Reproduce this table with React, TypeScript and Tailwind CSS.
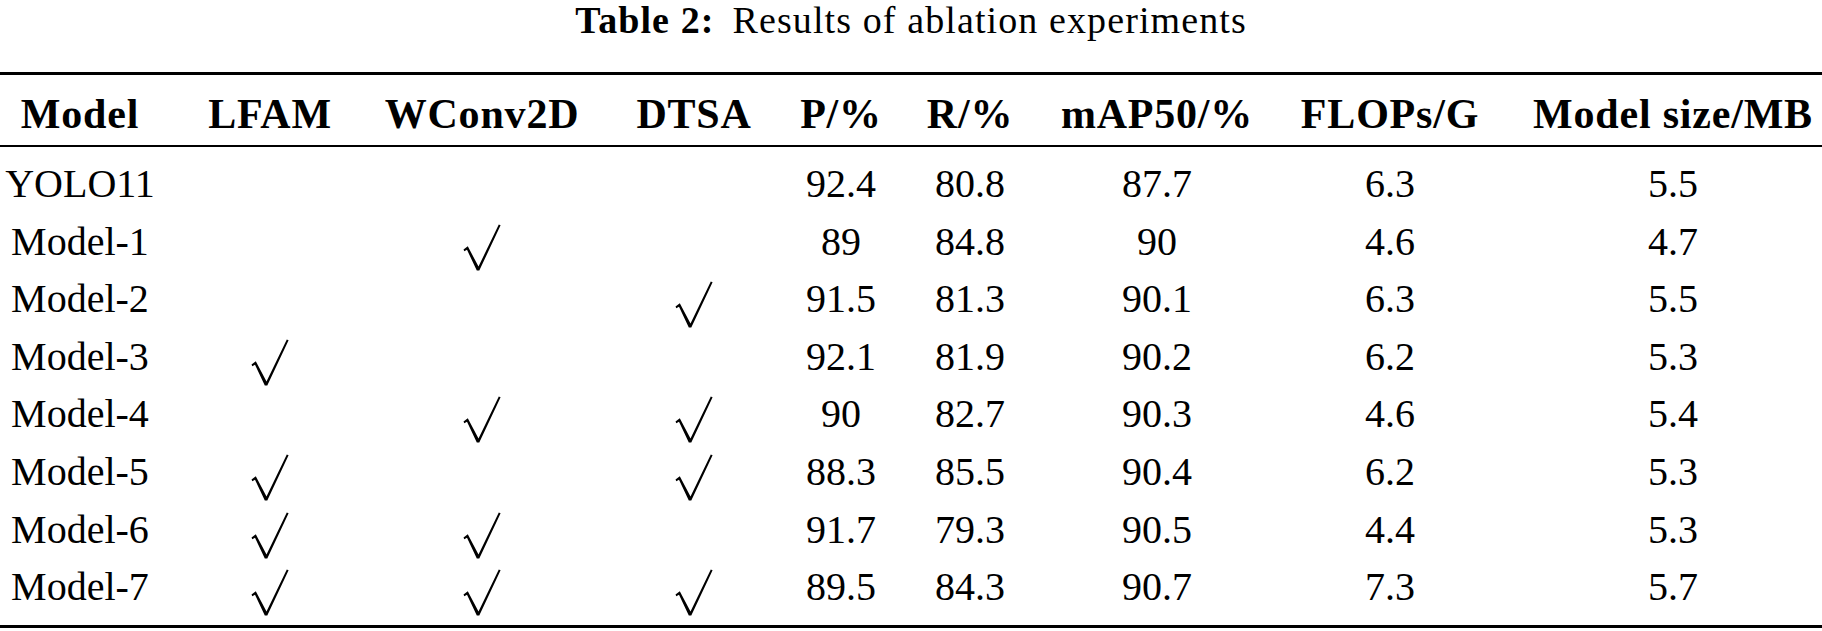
import React from 'react';

const cols = 'grid grid-cols-[160px_220px_204px_220px_74px_184px_190px_276px_290px]';

const headers = ['Model', 'LFAM', 'WConv2D', 'DTSA', 'P/%', 'R/%', 'mAP50/%', 'FLOPs/G', 'Model size/MB'];

type Row = {
  name: string;
  lfam: boolean;
  wconv: boolean;
  dtsa: boolean;
  values: string[];
};

const rows: Row[] = [
  { name: 'YOLO11', lfam: false, wconv: false, dtsa: false, values: ['92.4', '80.8', '87.7', '6.3', '5.5'] },
  { name: 'Model-1', lfam: false, wconv: true, dtsa: false, values: ['89', '84.8', '90', '4.6', '4.7'] },
  { name: 'Model-2', lfam: false, wconv: false, dtsa: true, values: ['91.5', '81.3', '90.1', '6.3', '5.5'] },
  { name: 'Model-3', lfam: true, wconv: false, dtsa: false, values: ['92.1', '81.9', '90.2', '6.2', '5.3'] },
  { name: 'Model-4', lfam: false, wconv: true, dtsa: true, values: ['90', '82.7', '90.3', '4.6', '5.4'] },
  { name: 'Model-5', lfam: true, wconv: false, dtsa: true, values: ['88.3', '85.5', '90.4', '6.2', '5.3'] },
  { name: 'Model-6', lfam: true, wconv: true, dtsa: false, values: ['91.7', '79.3', '90.5', '4.4', '5.3'] },
  { name: 'Model-7', lfam: true, wconv: true, dtsa: true, values: ['89.5', '84.3', '90.7', '7.3', '5.7'] },
];

function Check() {
  return (
    <svg width="38" height="47" viewBox="0 0 38 47" aria-label="yes">
      <path d="M0.5 25.5 L4.8 22.3 L15.5 42.5 L35.8 0.5 L37.6 1.3 L16.3 46.5 L13.8 46.5 L4 25.8 L1.3 27.3 Z" fill="#000" />
    </svg>
  );
}

function MarkCell({ on }: { on: boolean }) {
  return <div className="flex justify-center pt-[11px]">{on && <Check />}</div>;
}

export default function App() {
  return (
    <div className="w-[1822px] h-[631px] bg-white text-black overflow-hidden font-['Liberation_Serif',serif]">
      {/* Caption */}
      <div className="h-[40px] text-center text-[38px] leading-[40px] tracking-[1.1px] whitespace-nowrap">
        <span className="font-bold">Table 2:</span>
        <span className="ml-[18px]">Results of ablation experiments</span>
      </div>

      {/* Table */}
      <div className="mt-[32px] border-t-[3px] border-b-[3px] border-black">
        <div className={`${cols} h-[72px] pt-[17px] border-b-2 border-black text-[42px] leading-[45px] tracking-[0.8px] font-bold`}>
          {headers.map((h) => (
            <div key={h} className="flex justify-center whitespace-nowrap">
              {h}
            </div>
          ))}
        </div>

        <div className="pt-[8px] pb-[9px]">
          {rows.map((r) => (
            <div key={r.name} className={`${cols} h-[57.6px] text-[40px] leading-[57.6px]`}>
              <div className="flex justify-center whitespace-nowrap">{r.name}</div>
              <MarkCell on={r.lfam} />
              <MarkCell on={r.wconv} />
              <MarkCell on={r.dtsa} />
              {r.values.map((v, i) => (
                <div key={i} className="flex justify-center whitespace-nowrap">
                  {v}
                </div>
              ))}
            </div>
          ))}
        </div>
      </div>
    </div>
  );
}
